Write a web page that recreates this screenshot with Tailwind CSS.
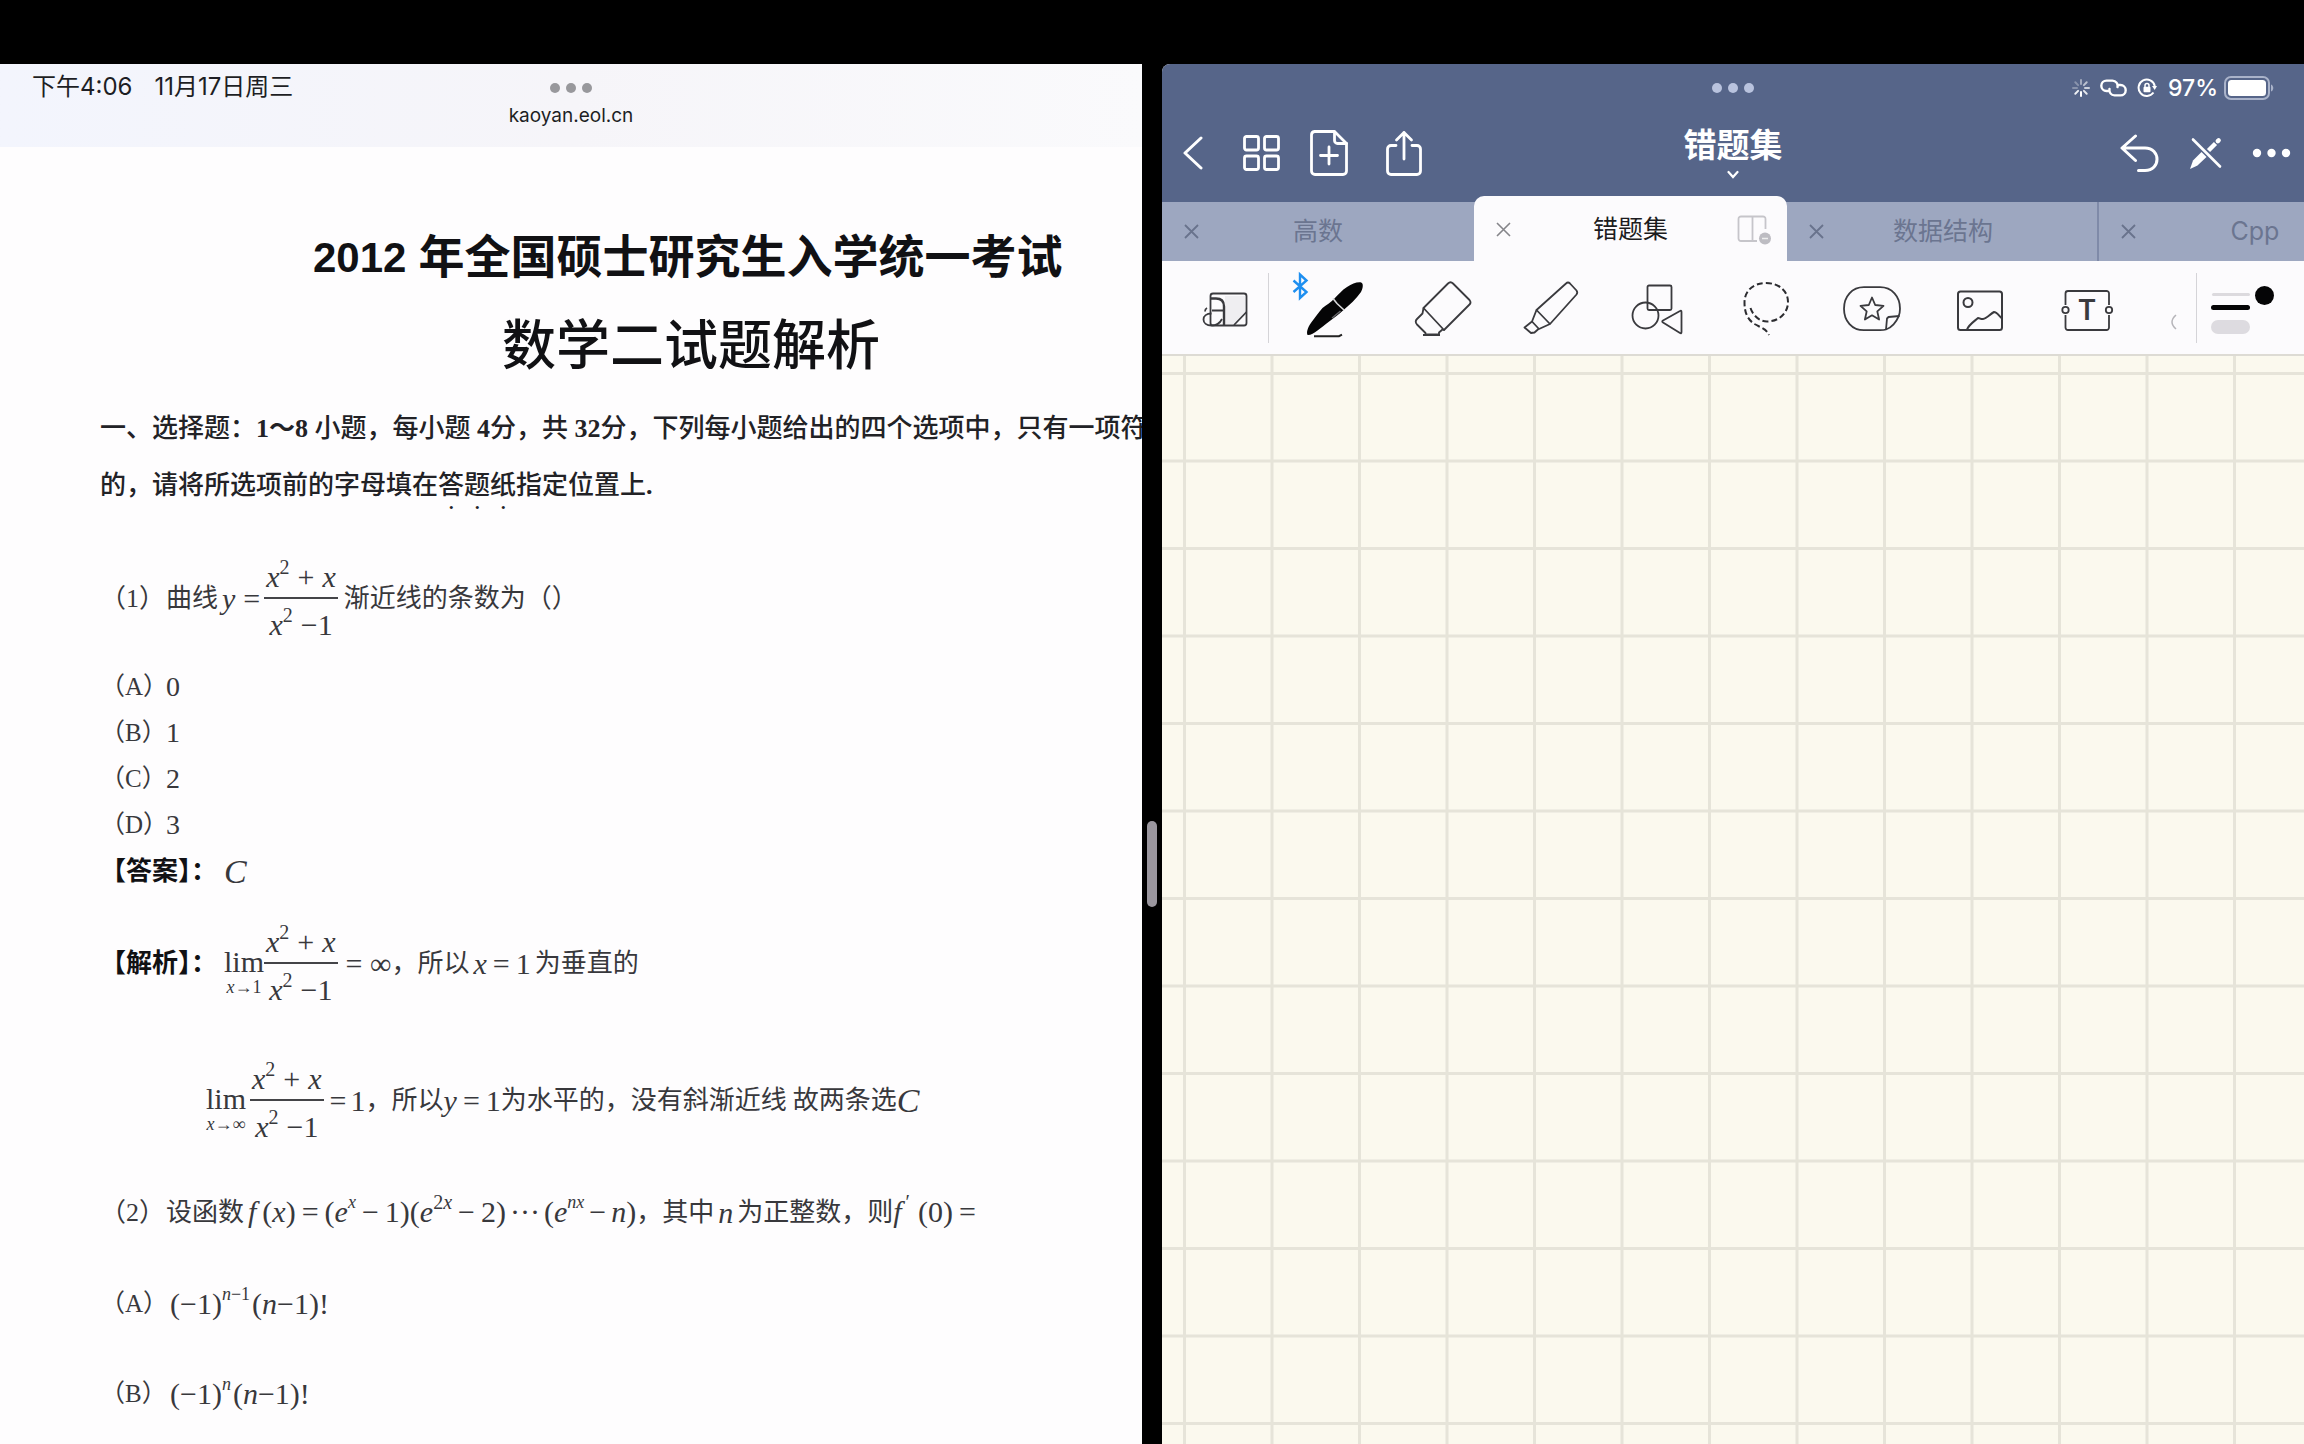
<!DOCTYPE html>
<html lang="zh-CN">
<head>
<meta charset="utf-8">
<meta name="viewport" content="width=device-width, initial-scale=1">
<title>错题集</title>
<script src="https://cdn.jsdelivr.net/npm/@tailwindcss/browser@4"></script>
</head>
<body class="flex h-screen flex-col overflow-hidden bg-black pt-16 font-['Inter','Noto_Sans_CJK_SC',sans-serif]">
<main class="grid min-h-0 flex-1 grid-cols-[minmax(0,1fr)_20px_minmax(0,1fr)]">

  <!-- Browser pane -->
  <section class="flex min-h-0 min-w-0 flex-col overflow-hidden bg-[#fefdfe]">
    <header class="grid h-[83px] shrink-0 grid-cols-3 bg-linear-to-r from-[#f3f5fd] via-[#f6f5f9] to-[#fafafc] text-[#1d1e24]">
      <div class="flex h-[46px] items-center gap-[22px] whitespace-nowrap pl-8 text-[24px]"><span>下午4:06</span><span>11月17日周三</span></div>
      <div class="flex flex-col items-center">
        <button class="flex h-12 items-center gap-[6px]" aria-label="窗口选项"><i class="size-[10px] rounded-full bg-[#98989c]"></i><i class="size-[10px] rounded-full bg-[#98989c]"></i><i class="size-[10px] rounded-full bg-[#98989c]"></i></button>
        <a href="#" class="-mt-2 text-[19px] leading-6">kaoyan.eol.cn</a>
      </div>
    </header>

    <article class="flex flex-col whitespace-nowrap pl-[100px] pt-[65px] font-['Liberation_Serif','Noto_Sans_CJK_SC',serif] text-[26px] text-[#38383c]">
      <h1 class="flex h-[90px] items-center gap-3 pl-[213px] font-['Liberation_Sans','Noto_Sans_CJK_SC',sans-serif] text-[46px] font-bold text-[#111114]"><span class="text-[42px]">2012</span><span>年全国硕士研究生入学统一考试</span></h1>
      <h2 class="flex h-[90px] items-center pl-[402px] text-[54px] font-medium text-[#111114]">数学二试题解析</h2>
      <p class="mt-2 h-[57px] font-medium leading-[57px] text-[#222226]">一、选择题：<b>1～8</b> 小题，每小题 <b>4</b>分，共 <b>32</b>分，下列每小题给出的四个选项中，只有一项符</p>
      <p class="h-[57px] font-medium leading-[57px] text-[#222226]">的，请将所选项前的字母填在<span class="[text-emphasis:dot] [text-emphasis-position:under_right]">答题纸</span>指定位置上<b>.</b></p>

      <div class="mt-[35px] flex h-[98px] items-center">
        <span class="w-[66px]">（1）</span><span>曲线</span>
        <span class="ml-1 flex items-center gap-2 text-[30px]"><i>y</i><span>=</span></span>
        <span class="ml-1 flex flex-col items-center text-[30px] leading-10">
          <span class="flex h-12 items-end px-[2px]"><i>x</i><sup class="top-0 mb-5 self-end text-[20px] leading-5">2</sup><span class="ml-2">+</span><i class="ml-2">x</i></span>
          <span class="h-[2px] w-full bg-[#444448]"></span>
          <span class="flex h-12 items-start pt-[6px]"><i>x</i><sup class="top-0 text-[20px] leading-5">2</sup><span class="ml-2">−</span><span>1</span></span>
        </span>
        <span class="ml-[6px]">渐近线的条数为（）</span>
      </div>

      <ul class="mt-[17px]">
        <li class="flex h-[46px] items-center"><span class="w-[66px] text-[25px]">（A）</span><span class="text-[28px] leading-8">0</span></li>
        <li class="flex h-[46px] items-center"><span class="w-[66px] text-[25px]">（B）</span><span class="text-[28px] leading-8">1</span></li>
        <li class="flex h-[46px] items-center"><span class="w-[66px] text-[25px]">（C）</span><span class="text-[28px] leading-8">2</span></li>
        <li class="flex h-[46px] items-center"><span class="w-[66px] text-[25px]">（D）</span><span class="text-[28px] leading-8">3</span></li>
      </ul>
      <div class="flex h-[46px] items-center"><b class="w-[124px] text-[#111114]">【答案】：</b><i class="text-[34px]">C</i></div>

      <div class="mt-[20px] flex h-[98px] items-center">
        <b class="w-[124px] text-[#111114]">【解析】：</b>
        <span class="flex flex-col items-center pt-[18px]"><span class="text-[30px] leading-[30px]">lim</span><span class="text-[18px] leading-5"><i>x</i>→1</span></span>
        <span class="flex flex-col items-center text-[30px] leading-10">
          <span class="flex h-12 items-end px-[2px]"><i>x</i><sup class="top-0 mb-5 self-end text-[20px] leading-5">2</sup><span class="ml-2">+</span><i class="ml-2">x</i></span>
          <span class="h-[2px] w-full bg-[#444448]"></span>
          <span class="flex h-12 items-start pt-[6px]"><i>x</i><sup class="top-0 text-[20px] leading-5">2</sup><span class="ml-2">−</span><span>1</span></span>
        </span>
        <span class="ml-2 text-[30px]">= ∞</span><span>，</span><span>所以</span>
        <span class="mx-1 flex items-center gap-[6px] text-[30px]"><i>x</i><span>=</span><span>1</span></span><span>为垂直的</span>
      </div>

      <div class="mt-[39px] flex h-[98px] items-center pl-[106px]">
        <span class="flex flex-col items-center pt-[18px]"><span class="text-[30px] leading-[30px]">lim</span><span class="text-[18px] leading-5"><i>x</i>→∞</span></span>
        <span class="ml-1 flex flex-col items-center text-[30px] leading-10">
          <span class="flex h-12 items-end px-[2px]"><i>x</i><sup class="top-0 mb-5 self-end text-[20px] leading-5">2</sup><span class="ml-2">+</span><i class="ml-2">x</i></span>
          <span class="h-[2px] w-full bg-[#444448]"></span>
          <span class="flex h-12 items-start pt-[6px]"><i>x</i><sup class="top-0 text-[20px] leading-5">2</sup><span class="ml-2">−</span><span>1</span></span>
        </span>
        <span class="ml-[6px] flex gap-1 text-[30px]"><span>=</span><span>1</span></span><span>，</span><span>所以</span>
        <span class="flex items-center gap-[6px] text-[30px]"><i>y</i><span>=</span><span>1</span></span><span>为水平的，没有斜渐近线</span><span class="ml-[6px]">故两条选</span><i class="text-[34px]">C</i>
      </div>

      <div class="mt-[33px] flex h-[60px] items-center">
        <span class="w-[66px]">（2）</span><span>设函数</span>
        <span class="ml-1 flex items-center text-[30px] leading-10">
          <i class="mr-[6px]">f</i><span>(<i>x</i>)</span><span class="mx-[6px]">=</span>
          <span>(<i>e</i></span><i class="self-start text-[18px] leading-5">x</i><span class="mx-[6px]">−</span><span>1)(<i>e</i></span>
          <span class="self-start text-[20px] leading-5">2<i>x</i></span><span class="mx-[6px]">−</span><span>2)</span><span class="mx-1">···</span><span>(<i>e</i></span>
          <i class="self-start text-[18px] leading-5">nx</i><span class="mx-[5px]">−</span><span><i>n</i>)</span>
        </span>
        <span>，</span><span>其中</span><i class="mx-1 text-[30px]">n</i><span>为正整数，则</span>
        <span class="flex items-center text-[30px] leading-10"><i>f</i><span class="ml-1 self-start text-[20px] leading-5">′</span><span class="ml-2">(0)</span><span class="ml-[6px]">=</span></span>
      </div>

      <div class="mt-[17px] flex h-[90px] items-center">
        <span class="w-[70px] text-[25px]">（A）</span>
        <span class="flex text-[30px] leading-10"><span>(−1)</span><span class="text-[18px] leading-5"><i>n</i>−1</span><span class="ml-[2px]">(<i>n</i>−1)!</span></span>
      </div>
      <div class="flex h-[90px] items-center">
        <span class="w-[70px] text-[25px]">（B）</span>
        <span class="flex text-[30px] leading-10"><span>(−1)</span><i class="text-[18px] leading-5">n</i><span class="ml-[2px]">(<i>n</i>−1)!</span></span>
      </div>
    </article>
  </section>

  <!-- Split handle -->
  <div class="flex justify-center pt-[757px]"><button class="h-[86px] w-[10px] rounded-full bg-[#9a969e]" aria-label="调整分屏"></button></div>

  <!-- Notebook pane -->
  <section class="flex min-h-0 min-w-0 flex-col overflow-hidden rounded-tl-lg bg-[#fbf9ee]">
    <header class="h-[138px] shrink-0 bg-[#566589] text-white">
      <div class="grid h-12 grid-cols-3 items-center">
        <button class="col-start-2 flex items-center gap-[6px] justify-self-center" aria-label="窗口选项"><i class="size-[10px] rounded-full bg-[#b9c3de]"></i><i class="size-[10px] rounded-full bg-[#b9c3de]"></i><i class="size-[10px] rounded-full bg-[#b9c3de]"></i></button>
        <div class="flex h-[46px] items-center justify-end pr-[30px]">
          <svg class="size-[18px]" viewBox="0 0 18 18" fill="none" stroke="#fff" stroke-width="2" stroke-linecap="round"><path d="M9 1v4" opacity=".45"/><path d="M14.7 3.300l-2.800 2.800" opacity=".6"/><path d="M17 9h-4" opacity=".7"/><path d="M14.700 14.700l-2.800-2.800" opacity=".85"/><path d="M9 17v-4"/><path d="M3.300 14.700l2.800-2.800" opacity=".9"/><path d="M1 9h4" opacity=".3"/><path d="M3.300 3.300l2.800 2.800" opacity=".3"/></svg>
          <svg class="ml-[10px] h-[18px] w-[27px]" viewBox="0 0 27 18" fill="none" stroke="#fff" stroke-width="2.400" stroke-linecap="round"><path d="M9 12H6.500a5.200 5.200 0 0 1 0-10.400h6a5.200 5.200 0 0 1 5 6.500"/><path d="M18 6h2.500a5.200 5.200 0 0 1 0 10.400h-6a5.200 5.200 0 0 1-5-6.500"/></svg>
          <svg class="ml-[10px] size-5" viewBox="0 0 20 20" fill="none" stroke="#fff" stroke-width="2"><path d="M16.500 14.500a8.200 8.200 0 1 1 1.300-6.500"/><path d="M15 8h5l-2.300 4z" fill="#fff" stroke="none"/><rect x="6.500" y="8.800" width="7" height="5.400" rx="1" fill="#fff" stroke="none"/><path d="M8 9V7.500a2 2 0 0 1 4 0V9" stroke-width="1.500"/></svg>
          <span class="ml-[11px] text-[23px] font-medium">97%</span>
          <svg class="ml-[6px] h-6 w-[50px]" viewBox="0 0 50 24" fill="none"><rect x="1" y="1" width="44" height="22" rx="6" stroke="#aab3ca" stroke-width="2"/><rect x="4" y="4" width="38" height="16" rx="3.500" fill="#fff"/><path d="M47 8.500c3 1 3 6 0 7z" fill="#aab3ca"/></svg>
        </div>
      </div>
      <nav class="grid h-[82px] grid-cols-3 items-center">
        <div class="flex items-center pl-[21px]">
          <button aria-label="返回"><svg class="h-[34px] w-5" viewBox="0 0 20 34" fill="none" stroke="#fff" stroke-width="3" stroke-linecap="round" stroke-linejoin="round"><path d="M18 2L2 17l16 15"/></svg></button>
          <button class="ml-10" aria-label="缩略图"><svg class="h-9 w-[38px]" viewBox="0 0 38 36" fill="none" stroke="#fff" stroke-width="2.800"><rect x="1.500" y="1.500" width="14" height="13.500" rx="2"/><rect x="21.500" y="1.500" width="14" height="13.500" rx="2"/><rect x="1.500" y="21" width="14" height="13.500" rx="2"/><rect x="21.500" y="21" width="14" height="13.500" rx="2"/></svg></button>
          <button class="ml-[29px]" aria-label="添加页面"><svg class="h-[46px] w-[38px]" viewBox="0 0 38 46" fill="none" stroke="#fff" stroke-width="2.800" stroke-linejoin="round" stroke-linecap="round"><path d="M4.500 1.500h20l12 12v27.500a3.500 3.500 0 0 1-3.500 3.500H5A3.500 3.500 0 0 1 1.500 41V5a3.500 3.500 0 0 1 3-3.500z"/><path d="M24.500 2v8.500a3 3 0 0 0 3 3h9"/><path d="M19 17v17M10.500 25.500h17"/></svg></button>
          <button class="ml-[38px]" aria-label="分享"><svg class="h-[46px] w-9" viewBox="0 0 36 46" fill="none" stroke="#fff" stroke-width="2.800" stroke-linejoin="round" stroke-linecap="round"><path d="M10 15.500H5a3.500 3.500 0 0 0-3.500 3.500v22A3.500 3.500 0 0 0 5 44.500h26a3.500 3.500 0 0 0 3.500-3.500V19a3.500 3.500 0 0 0-3.500-3.500h-5"/><path d="M18 29V2.500M10.500 10L18 2.500l7.500 7.500"/></svg></button>
        </div>
        <button class="flex flex-col items-center justify-self-center pb-2 text-[33px] font-bold leading-[50px]">错题集<svg class="h-[9px] w-3" viewBox="0 0 12 9" fill="none" stroke="#fff" stroke-width="2.200" stroke-linecap="round"><path d="M1.500 2L6 7l4.500-5"/></svg></button>
        <div class="flex items-center justify-end gap-[30px] pr-[13px]">
          <button aria-label="撤销"><svg class="h-[38px] w-[39px]" viewBox="0 0 39 38" fill="none" stroke="#fff" stroke-width="3" stroke-linecap="round" stroke-linejoin="round"><path d="M15.500 2L2 14l13.500 12.500M2.500 14H25c16 0 16 22.500 0 22.500h-6.500"/></svg></button>
          <button aria-label="只读模式"><svg class="size-[33px]" viewBox="0 0 33 33" fill="none" stroke="#fff" stroke-linecap="round"><path d="M4 2.500l27 27" stroke-width="2.600"/><path d="M19.500 13.500l7-7" stroke-width="4.500" stroke-linecap="butt"/><path d="M28.800 4.200l.8-.8" stroke-width="4.500"/><path d="M1 32l3-8.500 8.500-8.500 5 5-9 8.500z" fill="#fff" stroke="none"/></svg></button>
          <button aria-label="更多"><svg class="h-[10px] w-[39px]" viewBox="0 0 39 10" fill="#fff"><circle cx="5" cy="5" r="4.200"/><circle cx="19.500" cy="5" r="4.200"/><circle cx="34" cy="5" r="4.200"/></svg></button>
        </div>
      </nav>
    </header>

    <div class="flex h-[59px] shrink-0 items-end bg-[#9da7c0] text-[25px] text-[#6b7590]" role="tablist">
      <div class="flex h-[59px] w-[312px] shrink-0 items-center px-[22px]" role="tab">
        <button aria-label="关闭"><svg class="size-[15px]" viewBox="0 0 15 15" stroke="#69738c" stroke-width="1.800"><path d="M1 1l13 13M14 1L1 14"/></svg></button><span class="flex-1 pr-[15px] text-center">高数</span>
      </div>
      <div class="z-10 flex h-[65px] w-[313px] shrink-0 items-center rounded-t-[10px] bg-[#fcfbfd] px-[22px] pt-[2px] text-[#1c1c20]" role="tab" aria-selected="true">
        <button aria-label="关闭"><svg class="size-[15px]" viewBox="0 0 15 15" stroke="#85858a" stroke-width="1.600"><path d="M1 1l13 13M14 1L1 14"/></svg></button><span class="flex-1 pl-[13px] text-center">错题集</span>
        <button aria-label="分屏视图"><svg class="-mr-2 h-[30px] w-9" viewBox="0 0 36 30" fill="none" stroke="#c6c5ca" stroke-width="1.800"><path d="M20 26H4a2.500 2.500 0 0 1-2.500-2.500V4A2.500 2.500 0 0 1 4 1.500h22A2.500 2.500 0 0 1 28.500 4v10M15.500 1.500V26"/><circle cx="28" cy="23.500" r="6" fill="#bdbcc2" stroke="none"/><path d="M25 23.500h6" stroke="#eee" stroke-width="1.500"/></svg></button>
      </div>
      <div class="flex h-[59px] w-[312px] shrink-0 items-center border-r-2 border-[#7f8aa8] px-[22px]" role="tab">
        <button aria-label="关闭"><svg class="size-[15px]" viewBox="0 0 15 15" stroke="#69738c" stroke-width="1.800"><path d="M1 1l13 13M14 1L1 14"/></svg></button><span class="flex-1 pr-[13px] text-center">数据结构</span>
      </div>
      <div class="flex h-[59px] w-[312px] shrink-0 items-center px-[22px]" role="tab">
        <button aria-label="关闭"><svg class="size-[15px]" viewBox="0 0 15 15" stroke="#69738c" stroke-width="1.800"><path d="M1 1l13 13M14 1L1 14"/></svg></button><span class="flex-1 pr-[15px] text-center">Cpp</span>
      </div>
    </div>

    <div class="flex h-[95px] shrink-0 items-center border-b-2 border-[#dddbd4] bg-[#fcfbfd] pt-px" role="toolbar">
      <button class="flex w-[106px] justify-center pl-5" aria-label="放大书写"><svg class="size-[60px]" viewBox="0 0 60 60" fill="none" stroke="#3a3a3e" stroke-width="1.800"><rect x="15.500" y="15.500" width="36" height="32" rx="2.500"/><path d="M30 18h20v17L39 46h-9z" fill="#efeef1" stroke="none"/><path d="M15.500 20.500h5.500c5.500 0 8 3 8 8v19" stroke-width="2.400"/><path d="M17 32.500h12M39 47l12.500-13M12 30c-1.500.8-2 2-2 3.500M27 41c-2 4-6 6.500-10.500 6.500-5 0-8-2.500-8-6s3-6 8-6"/></svg></button>
      <span class="h-[70px] w-px bg-[#d5d4d8]"></span>
      <div class="ml-3 flex flex-1">
        <button class="flex flex-1 justify-center" aria-label="钢笔"><svg class="size-[60px] overflow-visible" viewBox="0 0 60 60" fill="none"><path d="M-11.500 2.500L1.500 14-5 20V-3.500L1.500 2.500-11.500 14" stroke="#1e8ff0" stroke-width="2.400"/><path d="M2.500 57c-1.500-3.500 1-9 4.500-13.500 3-4 6-8.500 10.500-13.500 4-3 8-5.500 11.500-9C33 17 37 12 42 9c5-3 9-5 13.500-4.700 3.500.5 2.500 6 .5 9.700-5 7-11 12.500-18 18.500-4.500 4-9 7.500-14.500 11.500-4 3-7.500 6-11 8.500C9 55 5 57.500 2.500 57z" fill="#050506"/><path d="M28 20.500l4 5 7 6.500" stroke="#d8d8da" stroke-width="1.600"/><path d="M27 40c4-3 6-5 8.500-7" stroke="#66666a" stroke-width="1.500"/><path d="M9 58.200h25l3-1.500" stroke="#222" stroke-width="2"/></svg></button>
        <button class="flex flex-1 justify-center" aria-label="橡皮擦"><svg class="size-[60px]" viewBox="0 0 60 60" fill="none" stroke="#3a3a3e" stroke-width="1.800" stroke-linejoin="round"><path d="M11.500 30L36 5.500q2.500-2.500 5 0L57.500 22q2 2.500 0 4.500L32 52z"/><path d="M11.500 30l-1 5.500-5.500 5.500q-2.500 2.500 0 5.500l8.500 8.500v1.500h13.500v-2l3.500-3 2 .5M11 57h17"/></svg></button>
        <button class="flex flex-1 justify-center" aria-label="荧光笔"><svg class="size-[60px]" viewBox="0 0 60 60" fill="none" stroke="#3a3a3e" stroke-width="1.800" stroke-linejoin="round"><path d="M16.500 32L46 5.500q2-2 4 0l6.500 7q1.500 2 0 4L30 46z"/><path d="M16.500 32l-4.500 11.500 7 7.500L30 46M12 43.500l-7.500 6 6.500 5.500 3.500-.5 4.500-4"/></svg></button>
        <button class="flex flex-1 justify-center" aria-label="形状"><svg class="size-[60px]" viewBox="0 0 60 60" fill="none" stroke="#3a3a3e" stroke-width="1.800" stroke-linejoin="round"><rect x="20.500" y="7.500" width="24" height="24.500" rx="1.500"/><circle cx="18.500" cy="37.500" r="13"/><path d="M36 42.500q-1.500 1 0 2L53 55q1.500.8 1.500-1V34q0-2-1.500-1z"/></svg></button>
        <button class="flex flex-1 justify-center" aria-label="套索"><svg class="size-[60px]" viewBox="0 0 60 60" fill="none" stroke="#2c2c30" stroke-width="2" stroke-dasharray="6 3"><path d="M15.500 30C18 38 25 43.500 32 43.500c12 0 21-8.500 21-19.500S44 5 31 5 9.500 13 9.500 24.500c0 10 3 17 10 21.500 7 4 12 5 14.500 11"/></svg></button>
        <button class="flex flex-1 justify-center" aria-label="贴纸"><svg class="size-[60px]" viewBox="0 0 60 60" fill="none" stroke="#3a3a3e" stroke-width="1.800" stroke-linejoin="round"><path d="M44 51.500c-2 .7-4 .7-6 .7H22C10 52.200 2 43 2 30.700S10 9.200 22 9.200h16c12 0 20 9.300 20 21.500 0 3-.5 5.500-1.500 8-2 5-7 11-12.500 12.800z"/><path d="M44 51.500l1-11 1.500-1.500 11-1"/><path d="M30 19.500l3.200 7.500 8.300.8-6.200 5.600 1.800 8.100L30 37.300l-7.100 4.200 1.800-8.100-6.200-5.600 8.300-.8z"/></svg></button>
        <button class="flex flex-1 justify-center" aria-label="图片"><svg class="size-[60px]" viewBox="0 0 60 60" fill="none" stroke="#3a3a3e" stroke-width="2" stroke-linejoin="round"><rect x="8" y="13.500" width="44" height="38.500" rx="2.500"/><circle cx="18" cy="24.500" r="4.500"/><path d="M17 51.500c2-5 7-8 11-11.500 2 0 3 1.500 5 1 4-.5 7-5 11-7 3 0 5 4 8 6.500"/></svg></button>
        <button class="flex flex-1 justify-center" aria-label="文本"><svg class="size-[60px]" viewBox="0 0 60 60" fill="none" stroke="#3a3a3e" stroke-width="1.800"><path d="M8.500 27V15.500a2.500 2.500 0 0 1 2.500-2.500h38.500a2.500 2.500 0 0 1 2.500 2.500V27M52 37v12.500a2.500 2.500 0 0 1-2.500 2.500H11a2.500 2.500 0 0 1-2.500-2.500V37"/><circle cx="8.500" cy="32" r="3.200"/><circle cx="52" cy="32" r="3.200"/><text x="30" y="42" text-anchor="middle" font-family="Inter" font-weight="600" font-size="28" fill="#3a3a3e" stroke="none">T</text></svg></button>
      </div>
      <span class="w-[55px]"><svg class="ml-7 mt-7 h-4 w-2" viewBox="0 0 8 16" fill="none" stroke="#b5b4b9" stroke-width="1.500"><path d="M7 1Q-1 8 7 15"/></svg></span>
      <span class="h-[70px] w-px bg-[#d5d4d8]"></span>
      <button class="w-[107px] pl-[14px]" aria-label="笔画粗细和颜色"><svg class="h-[60px] w-[64px]" viewBox="0 0 64 60"><rect x="1" y="15" width="38" height="3" rx="1.500" fill="#dcdade"/><rect x="0" y="27" width="39" height="5" rx="2.500" fill="#050506"/><rect x="0" y="42" width="39" height="14" rx="7" fill="#dddbe0"/><circle cx="53.500" cy="17.500" r="9.500" fill="#050506"/></svg></button>
    </div>

    <svg class="min-h-0 w-full flex-1" aria-label="方格纸">
      <defs><pattern id="grid" x="21" y="16" width="175" height="175" patternUnits="userSpaceOnUse"><path d="M1.500 0v175M89 0v175M0 1.500h175M0 89h175" stroke="#e6e4d9" stroke-width="3"/></pattern></defs>
      <rect width="100%" height="100%" fill="url(#grid)"/>
    </svg>
  </section>
</main>
</body>
</html>
